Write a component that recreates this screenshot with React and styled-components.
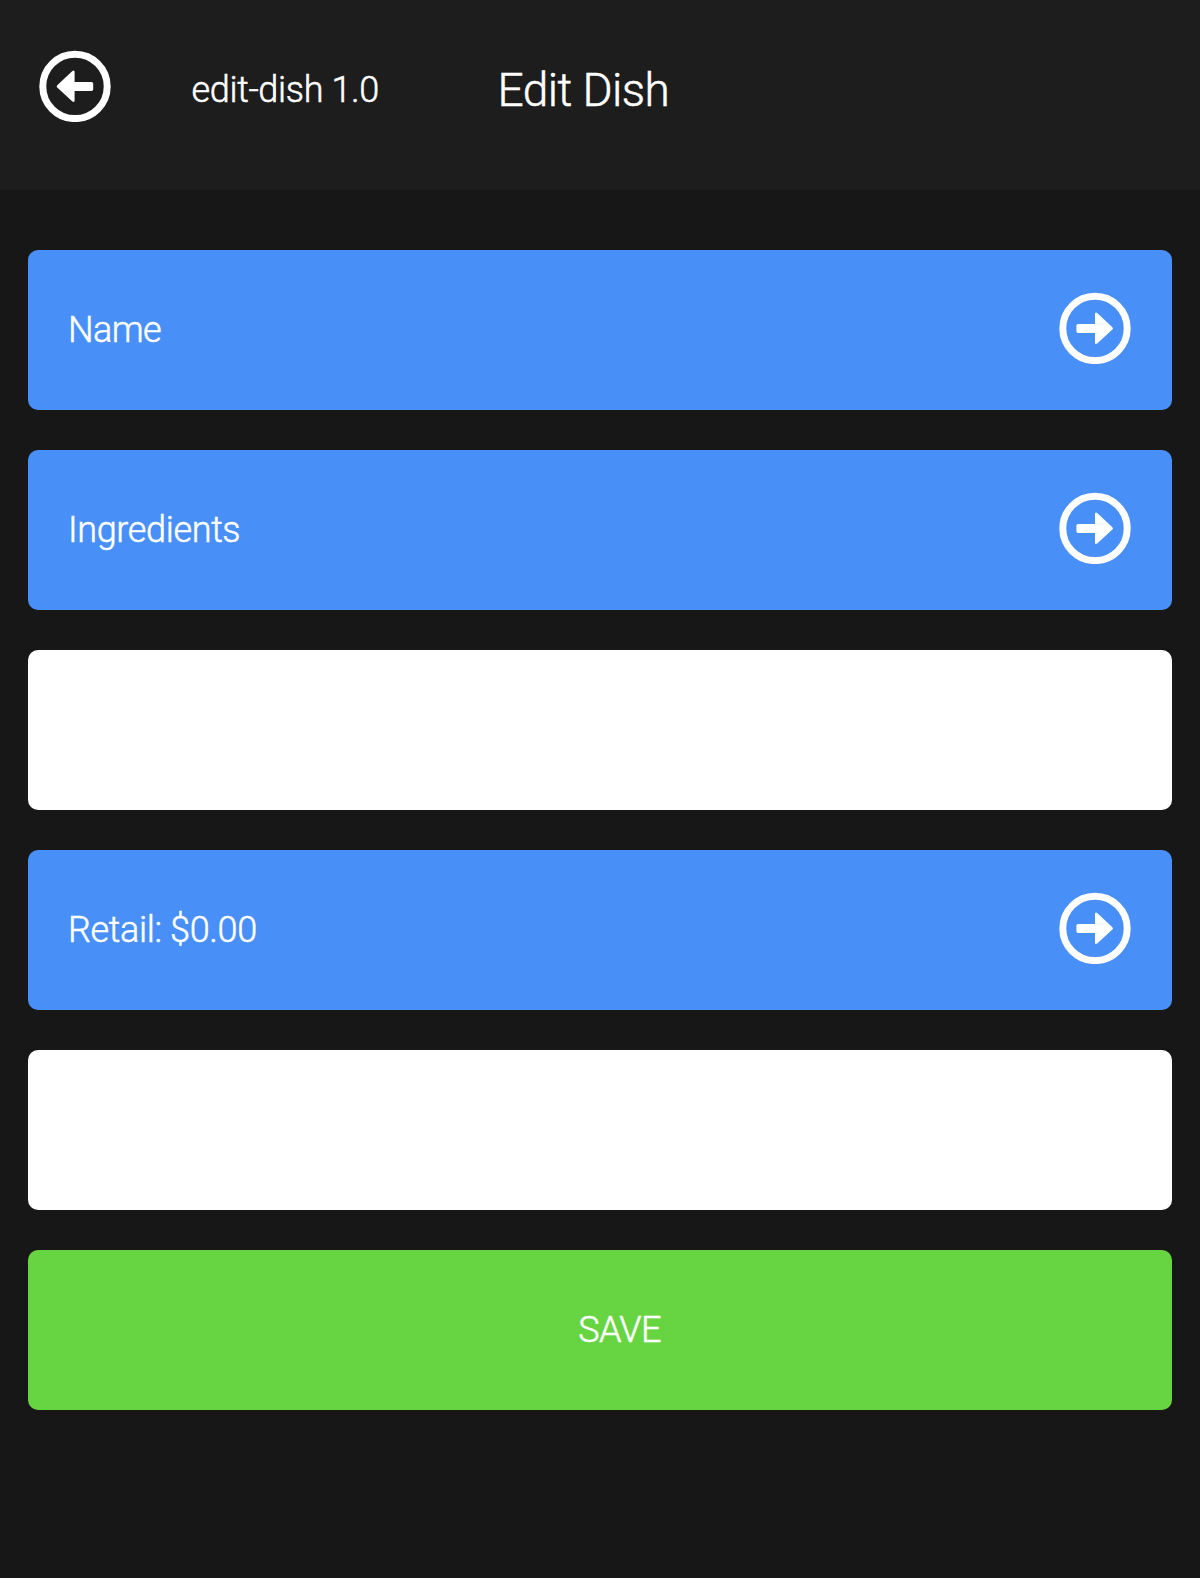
import React from 'react';
import styled, { createGlobalStyle } from 'styled-components';

const GlobalStyle = createGlobalStyle`
  body {
    margin: 0;
    background: #171717;
    color: #fff;
    font-family: Roboto, "Liberation Sans", sans-serif;
    font-weight: 300;
    -webkit-text-stroke: 0.5px #fff;
  }
`;

const Page = styled.div`
  box-sizing: border-box;
  min-height: 1578px;
  background: #171717;
`;

const Header = styled.header`
  display: grid;
  grid-template-columns: 191.5px 306px 1fr;
  box-sizing: border-box;
  height: 190px;
  background: #1d1d1d;
`;

const BackButton = styled.a`
  padding: 50px 0 0 39px;
  height: 72px;
`;

const Version = styled.span`
  font-size: 36px;
  line-height: 180px;
  letter-spacing: -0.35px;
`;

const Title = styled.h1`
  margin: 0;
  font-size: 46px;
  font-weight: 300;
  line-height: 180px;
  letter-spacing: -0.55px;
`;

const List = styled.main`
  display: flex;
  flex-direction: column;
  gap: 40px;
  padding: 60px 28px 0;
`;

const Row = styled.div`
  display: flex;
  justify-content: ${(p) => (p.$centered ? 'center' : 'space-between')};
  box-sizing: border-box;
  height: 160px;
  padding: 0 ${(p) => (p.$centered ? 0 : 41)}px 0 ${(p) => (p.$centered ? 39 : 40)}px;
  border-radius: 10px;
  background: ${(p) => p.$color};
`;

const Label = styled.span`
  font-size: 36px;
  line-height: 160px;
  letter-spacing: ${(p) => p.$spacing ?? -0.6}px;
`;

const Icon = styled.svg`
  display: block;
  width: 72px;
  height: 72px;
  margin-top: ${(p) => p.$top ?? 0}px;
`;

function CircleArrow({ left, top }) {
  return (
    <Icon $top={top} viewBox="0 0 72 72">
      <circle cx="36" cy="36.4" r="32.2" fill="none" stroke="#fff" strokeWidth="7" />
      <path
        transform={left ? 'translate(71.6 0) scale(-1 1)' : undefined}
        d="M19.2 32H36V22Q36 19.6 38.2 20.9L53.4 35.2Q54.6 36.4 53.4 37.6L38.2 51.6Q36 52.9 36 50.5V41H19.2Q17.4 41 17.4 39.2V33.8Q17.4 32 19.2 32Z"
        fill="#fff"
      />
    </Icon>
  );
}

function LinkRow({ label, spacing }) {
  return (
    <Row $color="#4890f8">
      <Label $spacing={spacing}>{label}</Label>
      <CircleArrow top={42} />
    </Row>
  );
}

export default function App() {
  return (
    <Page>
      <GlobalStyle />
      <Header>
        <BackButton aria-label="Back">
          <CircleArrow left />
        </BackButton>
        <Version>edit-dish 1.0</Version>
        <Title>Edit Dish</Title>
      </Header>
      <List>
        <LinkRow label="Name" />
        <LinkRow label="Ingredients" spacing={-0.35} />
        <Row $color="#fff" />
        <LinkRow label="Retail: $0.00" spacing={-0.35} />
        <Row $color="#fff" />
        <Row $color="#67d541" $centered>
          <Label>SAVE</Label>
        </Row>
      </List>
    </Page>
  );
}
